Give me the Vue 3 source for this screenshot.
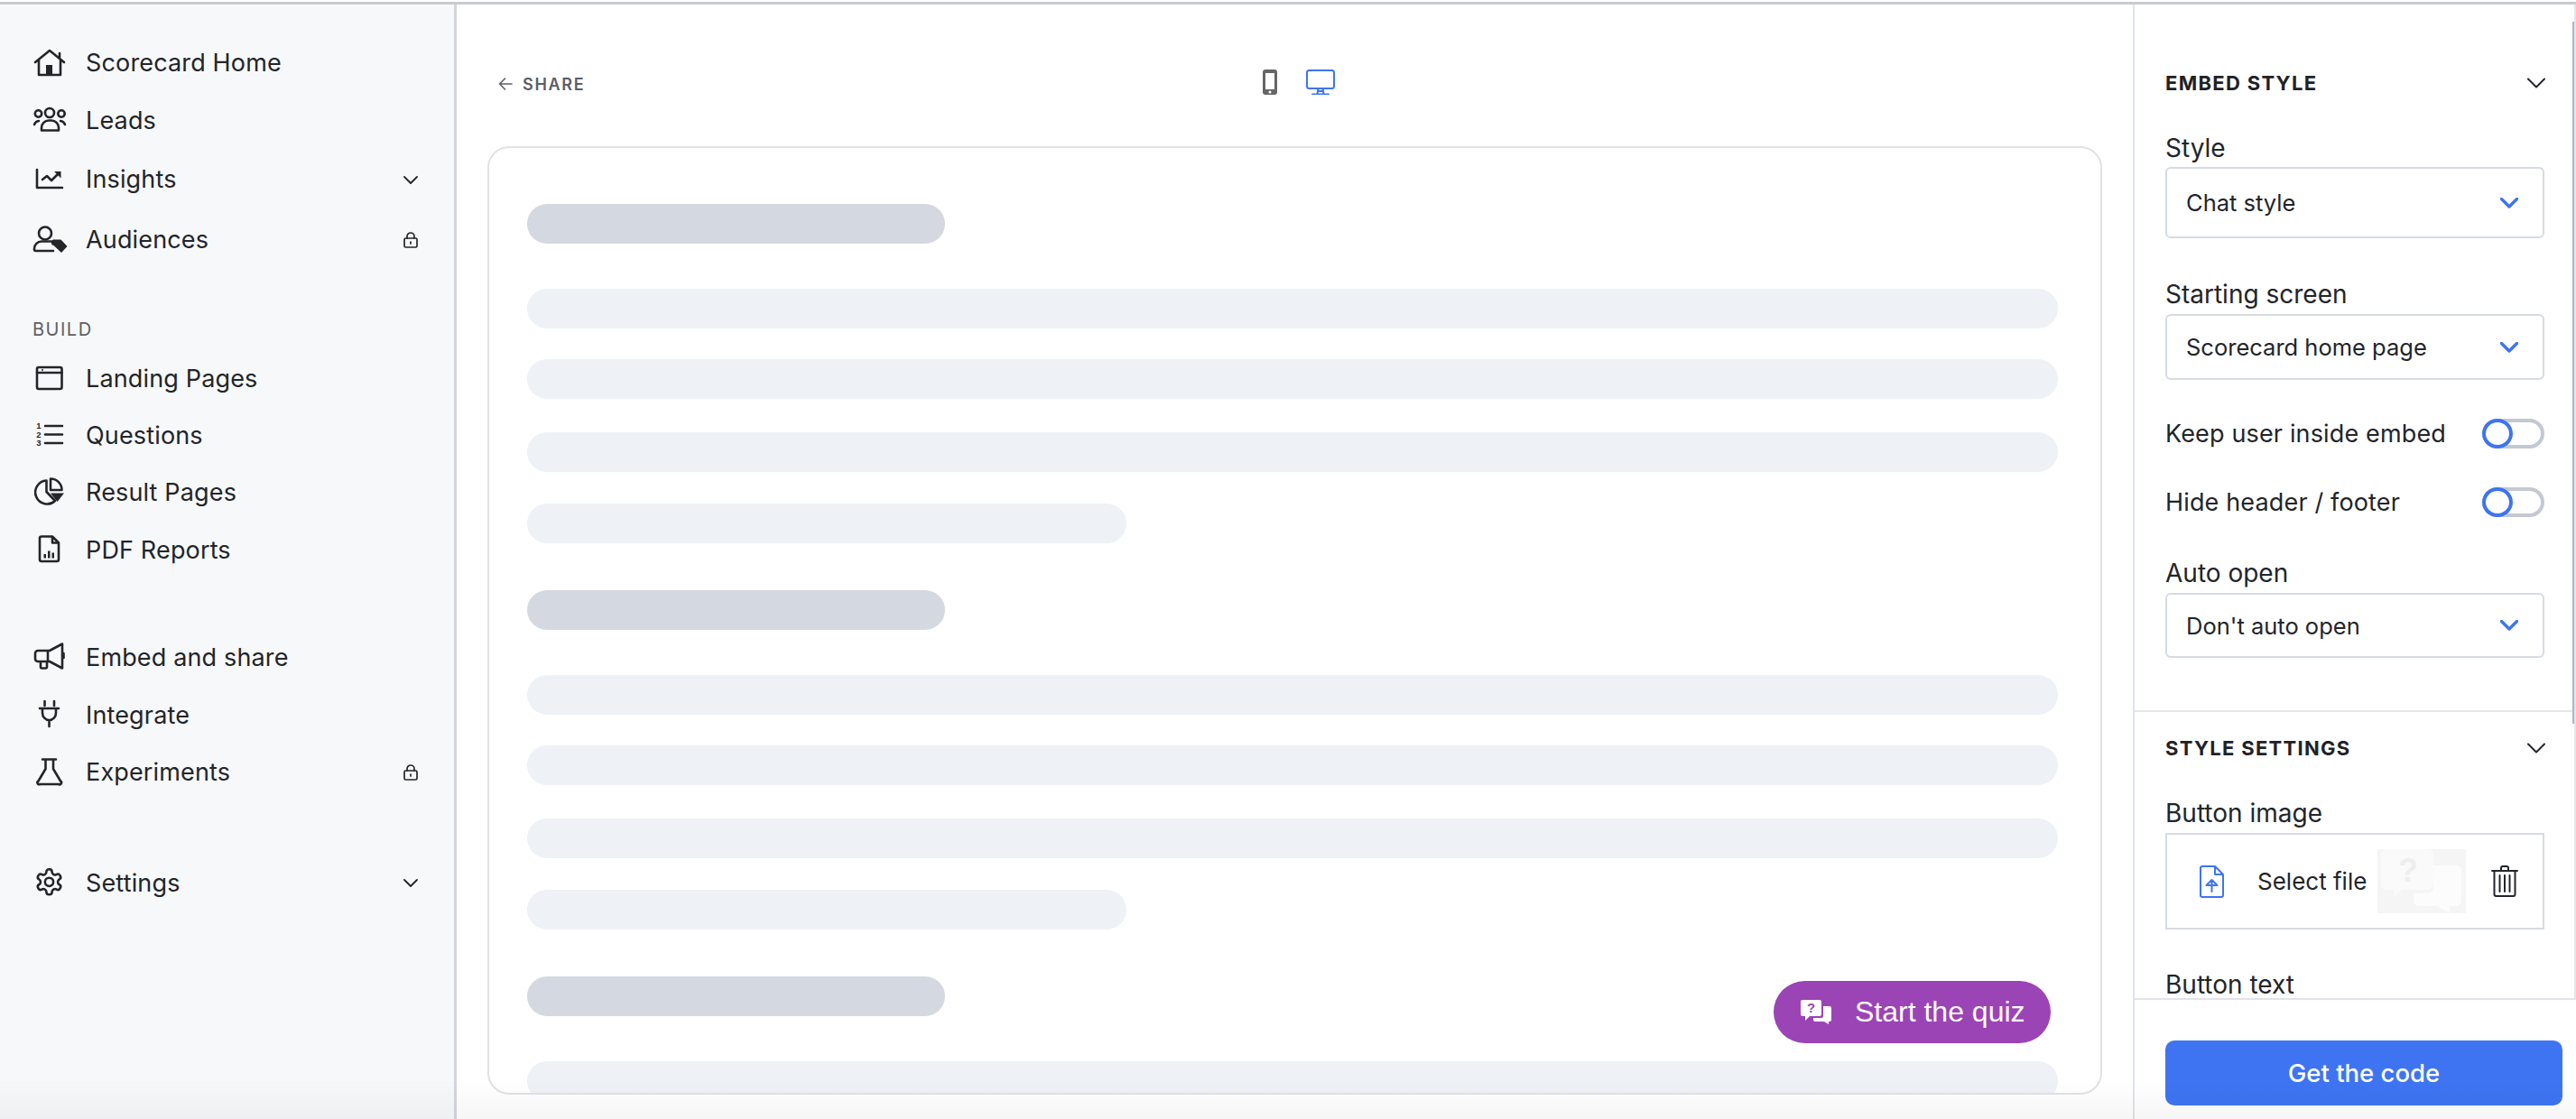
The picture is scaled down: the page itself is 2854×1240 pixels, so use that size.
<script setup>
const groups = [
  [{ cls: 'title' }, { cls: 'l1' }, { cls: 'l2' }, { cls: 'l3' }, { cls: 'l4 short' }],
  [{ cls: 'title' }, { cls: 'l1' }, { cls: 'l2' }, { cls: 'l3' }, { cls: 'l4 short' }],
  [{ cls: 'title' }, { cls: 'l1' }]
]
</script>

<template>
  <div class="app">
    <div class="topline"></div>
    <div class="layout">
      <aside class="sidebar">
        <nav class="nav">
          <a class="row h63">
            <svg class="ic" viewBox="0 0 36 36"><path d="M3 17 19 4l16 13M7 15v16h24V15M30 7v6"/><rect class="f" x="15" y="20" width="7" height="11"/></svg>
            <span>Scorecard Home</span>
          </a>
          <a class="row h64">
            <svg class="ic" viewBox="0 0 36 36"><circle cx="19" cy="10" r="5"/><circle cx="6.5" cy="11" r="3.7"/><circle cx="32" cy="11" r="3.7"/><path d="M10 29.5v-3a8 8 0 0 1 8-8h3a8 8 0 0 1 8 8v3zM2 23a6 6 0 0 1 5-4M36 23a6 6 0 0 0-5-4"/></svg>
            <span>Leads</span>
          </a>
          <a class="row h67">
            <svg class="ic" viewBox="0 0 36 36"><path d="M5 7v20h28M11 18l5-4 5 5 8-8"/><path class="f" d="M24 9h7.500v7.500z"/></svg>
            <span>Insights</span>
            <svg class="tail" viewBox="0 0 16 16"><path d="M1 5l7 7 7-7"/></svg>
          </a>
          <a class="row h67">
            <svg class="ic" viewBox="0 0 36 36"><circle cx="14" cy="10.500" r="7"/><path d="M23 30H3.500A1.500 1.500 0 0 1 2 28.500v-1a8 8 0 0 1 8-8h11"/><path class="f" d="M25 17.500h6.500l7 7.500-6.500 7-8.500-8a2 2 0 0 1 1.500-6.500z"/></svg>
            <span>Audiences</span>
            <svg class="tail lock" viewBox="0 0 16 18"><rect x="1" y="7" width="14" height="10" rx="1.500"/><path d="M4 7V5a4 4 0 0 1 8 0v2"/><path d="M8 11v2"/></svg>
          </a>

          <div class="group-label">BUILD</div>

          <a class="row h63 first-build">
            <svg class="ic" viewBox="0 0 36 36"><rect x="5" y="5" width="27.500" height="24" rx="2"/><path d="M5 11h27.500"/><circle class="f" cx="11" cy="8" r="1"/></svg>
            <span>Landing Pages</span>
          </a>
          <a class="row h63">
            <svg class="ic" viewBox="0 0 36 36"><path d="M14 7h19M14 16.500h19M14 26h19"/><text class="num" x="7" y="10">1</text><text class="num" x="7" y="19.500">2</text><text class="num" x="7" y="29">3</text></svg>
            <span>Questions</span>
          </a>
          <a class="row h63">
            <svg class="ic" viewBox="0 0 36 36"><path d="M15.500 4.500a13 13 0 1 0 9.500 22.500L15.500 17zM20 2.500A12.500 12.500 0 0 1 32.500 15H20z"/><path class="f" d="M20 18.500h15L27.500 28z"/></svg>
            <span>Result Pages</span>
          </a>
          <a class="row h64">
            <svg class="ic" viewBox="0 0 36 36"><path d="M10 3.500h12l7 7V29a2 2 0 0 1-2 2H10a2 2 0 0 1-2-2V5.500a2 2 0 0 1 2-2zM22 3.500v7h7"/><rect class="f" x="12.500" y="23" width="2.500" height="4.500"/><rect class="f" x="17" y="19.500" width="2.500" height="8"/><rect class="f" x="21.500" y="21.500" width="2.500" height="6"/></svg>
            <span>PDF Reports</span>
          </a>

          <a class="row h64 second-block">
            <svg class="ic" viewBox="0 0 36 36"><path d="M33 3.500 19 11H6a3 3 0 0 0-3 3v6a3 3 0 0 0 3 3h13l14 7.500zM17 11v12M9 23v6a1.500 1.500 0 0 0 1.500 1.500h4a1.500 1.500 0 0 0 1.500-1.500v-6M34.500 14v5"/></svg>
            <span>Embed and share</span>
          </a>
          <a class="row h64">
            <svg class="ic" viewBox="0 0 36 36"><path d="M13.500 3v5M24 3v5M8 11h21M11 11v5a7.500 8 0 0 0 15 0v-5M18.500 24v7"/></svg>
            <span>Integrate</span>
          </a>
          <a class="row h63">
            <svg class="ic" viewBox="0 0 36 36"><path d="M11 3.500h15M14.500 3.500V14L6.500 27.500a2 2 0 0 0 2 3.500h20.500a2 2 0 0 0 2-3.500L23 14V3.500"/></svg>
            <span>Experiments</span>
            <svg class="tail lock" viewBox="0 0 16 18"><rect x="1" y="7" width="14" height="10" rx="1.500"/><path d="M4 7V5a4 4 0 0 1 8 0v2"/><path d="M8 11v2"/></svg>
          </a>

          <a class="row h64 third-block">
            <svg class="ic" viewBox="0 0 36 36"><g class="gear"><path d="M12.220 2h-.440a2 2 0 0 0-2 2v.180a2 2 0 0 1-1 1.730l-.430.250a2 2 0 0 1-2 0l-.150-.080a2 2 0 0 0-2.730.730l-.220.380a2 2 0 0 0 .730 2.730l.150.100a2 2 0 0 1 1 1.720v.510a2 2 0 0 1-1 1.740l-.150.090a2 2 0 0 0-.730 2.730l.220.380a2 2 0 0 0 2.730.730l.150-.080a2 2 0 0 1 2 0l.430.250a2 2 0 0 1 1 1.730V20a2 2 0 0 0 2 2h.440a2 2 0 0 0 2-2v-.180a2 2 0 0 1 1-1.730l.430-.250a2 2 0 0 1 2 0l.150.080a2 2 0 0 0 2.730-.730l.220-.390a2 2 0 0 0-.730-2.730l-.150-.080a2 2 0 0 1-1-1.740v-.500a2 2 0 0 1 1-1.740l.150-.090a2 2 0 0 0 .730-2.730l-.220-.380a2 2 0 0 0-2.730-.730l-.150.080a2 2 0 0 1-2 0l-.430-.250a2 2 0 0 1-1-1.730V4a2 2 0 0 0-2-2z"/><circle cx="12" cy="12" r="3.300"/></g></svg>
            <span>Settings</span>
            <svg class="tail" viewBox="0 0 16 16"><path d="M1 5l7 7 7-7"/></svg>
          </a>
        </nav>
      </aside>

      <main class="main">
        <header class="main-head">
          <a class="back">
            <svg viewBox="0 0 16 16"><path d="M15 8H1.500M7.500 2 1.500 8l6 6"/></svg>
            <span>SHARE</span>
          </a>
          <div class="devices">
            <svg class="phone" viewBox="0 0 16 28"><rect width="16" height="28" rx="3" fill="#666"/><rect x="3" y="4" width="10" height="18" fill="#fff"/><circle cx="8" cy="25" r="1.500" fill="#fff"/></svg>
            <svg class="desktop" viewBox="0 0 32 28"><rect x="1" y="1" width="30" height="20" rx="2.500"/><path d="M13.500 21 12.500 27M18.500 21l1 6M7 27.500h18M13 24h6"/></svg>
          </div>
        </header>

        <section class="card">
          <div v-for="(group, g) in groups" :key="g" class="skel-group">
            <div v-for="(item, i) in group" :key="i" class="skel" :class="item.cls"></div>
          </div>
          <button class="quiz">
            <svg viewBox="0 0 34 27"><path d="M2 0h19a2 2 0 0 1 2 2v14a2 2 0 0 1-2 2H10l-5 5v-5H2a2 2 0 0 1-2-2V2a2 2 0 0 1 2-2z" fill="#fff"/><path d="M25 7h7a2 2 0 0 1 2 2v13a2 2 0 0 1-2 2h-1v3l-5-3H16a2 2 0 0 1-2-2v-2h9a2 2 0 0 0 2-2z" fill="#fff"/><text x="11.500" y="14" class="q">?</text></svg>
            <span>Start the quiz</span>
          </button>
        </section>
      </main>

      <aside class="panel">
        <div class="scroller">
          <div class="thumb"></div>
          <section class="sec sec-one">
            <div class="sec-head">
              <h3>EMBED STYLE</h3>
              <svg class="sec-chev" viewBox="0 0 20 12"><path d="M1 1.500l9 9 9-9"/></svg>
            </div>
            <label class="lab lab-first">Style</label>
            <div class="select s79"><span>Chat style</span><svg viewBox="0 0 20 12"><path d="M1.500 1.500 10 10l8.500-8.500"/></svg></div>
            <label class="lab">Starting screen</label>
            <div class="select s73"><span>Scorecard home page</span><svg viewBox="0 0 20 12"><path d="M1.500 1.500 10 10l8.500-8.500"/></svg></div>
            <div class="toggle-row"><span>Keep user inside embed</span><span class="toggle"><i></i></span></div>
            <div class="toggle-row"><span>Hide header / footer</span><span class="toggle"><i></i></span></div>
            <label class="lab">Auto open</label>
            <div class="select s72"><span>Don't auto open</span><svg viewBox="0 0 20 12"><path d="M1.500 1.500 10 10l8.500-8.500"/></svg></div>
          </section>
          <section class="sec sec-two">
            <div class="sec-head">
              <h3>STYLE SETTINGS</h3>
              <svg class="sec-chev" viewBox="0 0 20 12"><path d="M1 1.500l9 9 9-9"/></svg>
            </div>
            <label class="lab lab-first">Button image</label>
            <div class="file-box">
              <svg class="file-ic" viewBox="0 0 27 36"><path d="M3 1h14l9 9v23a2 2 0 0 1-2 2H3a2 2 0 0 1-2-2V3a2 2 0 0 1 2-2zM17 1v9h9M13.500 29V17M7.500 22l6-6 6 6z"/></svg>
              <span class="file-name">Select file</span>
              <svg class="file-thumb" viewBox="0 0 98 71"><rect width="98" height="71" fill="#f5f5f5"/><path d="M8 0h48a6 6 0 0 1 6 6v33a6 6 0 0 1-6 6H28L18 53v-8H10a6 6 0 0 1-6-6V4z" fill="#fafafa"/><path d="M62 18h25a6 6 0 0 1 6 6v33a6 6 0 0 1-6 6h-7v8l-14-8H46a6 6 0 0 1-6-6v-8h16a6 6 0 0 0 6-6z" fill="#fcfcfc"/><text x="34" y="36" class="thumb-q">?</text></svg>
              <svg class="trash" viewBox="0 0 30 35"><path d="M1 6h28M11 6V3a2 2 0 0 1 2-2h4a2 2 0 0 1 2 2v3M3.500 6v26a2 2 0 0 0 2 2h19a2 2 0 0 0 2-2V6M9.500 11v18M15 11v18M20.500 11v18"/></svg>
            </div>
            <label class="lab lab-last">Button text</label>
          </section>
        </div>
        <div class="panel-foot">
          <button class="cta">Get the code</button>
        </div>
      </aside>
    </div>
    <div class="bottom-fade"></div>
  </div>
</template>

<style>
html, body { margin: 0; padding: 0; background: #fff; overflow: hidden; }
</style>

<style scoped>
.app {
  position: relative;
  width: 2854px;
  height: 1240px;
  overflow: hidden;
  font-family: Inter, "Liberation Sans", sans-serif;
  color: #22252a;
  background: #fff;
}
.topline { height: 3px; margin-top: 2px; background: #c9cbce; }
.layout { display: flex; height: 1235px; }

.sidebar {
  width: 503px;
  flex: none;
  box-sizing: content-box;
  background: #f7f8fa;
  border-right: 3px solid #d3d5da;
}
.nav { padding-top: 33px; display: flex; flex-direction: column; }
.row {
  display: flex;
  align-items: center;
  padding: 0 40px 0 36px;
  font-size: 27px;
  letter-spacing: 0.150px;
  color: #22252a;
}
.row > span { margin-left: 23px; flex: 1; }
.h63 { height: 63px; }
.h64 { height: 64px; }
.h67 { height: 67px; }
.first-build { margin-top: 8px; }
.second-block { margin-top: 55px; }
.third-block { margin-top: 59px; }
.group-label {
  margin: 51px 0 0 36px;
  height: 30px;
  line-height: 30px;
  font-size: 20px;
  letter-spacing: 1.500px;
  color: #5d6068;
}
.ic {
  width: 36px;
  height: 36px;
  flex: none;
  overflow: visible;
  fill: none;
  stroke: #22252a;
  stroke-width: 2.6;
  stroke-linecap: round;
  stroke-linejoin: round;
}
.ic .f { fill: #22252a; stroke: none; }
.ic .num {
  font-family: "Liberation Sans", sans-serif;
  font-size: 9.500px;
  font-weight: 700;
  fill: #22252a;
  stroke: none;
  text-anchor: middle;
}
.ic .gear { transform: translate(1.700px, 0.500px) scale(1.400); stroke-width: 1.850; }
.tail {
  width: 16px;
  height: 16px;
  flex: none;
  fill: none;
  stroke: #22252a;
  stroke-width: 1.800;
  stroke-linecap: round;
  stroke-linejoin: round;
}
.tail.lock { height: 18px; stroke-width: 1.700; }

.main {
  flex: 1;
  min-width: 0;
  padding: 0 34px;
  background: #fff;
}
.main-head {
  height: 157px;
  box-sizing: border-box;
  padding: 19px 0 0 8px;
  display: grid;
  grid-template-columns: 1fr auto 1fr;
  align-items: center;
}
.back {
  display: flex;
  align-items: center;
  gap: 11px;
  margin-left: 4px;
  font-size: 18px;
  font-weight: 600;
  letter-spacing: 1.700px;
  color: #5c5e66;
}
.back svg {
  width: 16px;
  height: 16px;
  fill: none;
  stroke: #5c5e66;
  stroke-width: 1.600;
  stroke-linecap: round;
  stroke-linejoin: round;
}
.devices { display: flex; align-items: center; gap: 32px; margin-bottom: 4px; }
.phone { width: 16px; height: 28px; }
.desktop {
  width: 32px;
  height: 28px;
  fill: none;
  stroke: #3e74f2;
  stroke-width: 2;
  stroke-linecap: round;
}
.card {
  position: relative;
  height: 1051px;
  box-sizing: border-box;
  padding: 62px 47px 0 42px;
  border: 2px solid #e2e2e4;
  border-radius: 24px;
  background: #fff;
  overflow: hidden;
}
.skel-group { margin-bottom: 52px; }
.skel { height: 44px; border-radius: 22px; background: #eef1f5; }
.skel.title { width: 463px; background: #d4d8e0; }
.skel.l1 { margin-top: 50px; }
.skel.l2 { margin-top: 34px; }
.skel.l3 { margin-top: 37px; }
.skel.l4 { margin-top: 35px; }
.skel.short { width: 664px; }
.quiz {
  position: absolute;
  right: 55px;
  bottom: 55px;
  width: 307px;
  height: 69px;
  padding: 0 0 0 30px;
  border: 0;
  border-radius: 35px;
  background: #9b44b6;
  color: #fff;
  display: flex;
  align-items: center;
  gap: 26px;
  font-family: "Liberation Sans", Arial, sans-serif;
  font-size: 32px;
}
.quiz svg { width: 34px; height: 27px; flex: none; }
.quiz .q {
  font-family: "Liberation Sans", sans-serif;
  font-size: 15px;
  font-weight: 700;
  fill: #9b44b6;
  text-anchor: middle;
}

.panel {
  width: 489px;
  flex: none;
  border-left: 2px solid #dfe3e9;
  background: #fff;
  display: flex;
  flex-direction: column;
}
.scroller {
  position: relative;
  height: 1103px;
  flex: none;
  overflow: hidden;
  box-sizing: border-box;
  border-right: 2px solid #e3e6eb;
  border-bottom: 2px solid #e0e4ea;
}
.thumb {
  position: absolute;
  top: 19px;
  right: 0;
  width: 2px;
  height: 778px;
  background: #b4b6ba;
}
.sec { padding-left: 34px; padding-right: 33px; }
.sec-one { padding-top: 72px; padding-bottom: 58px; border-bottom: 2px solid #e3e6eb; }
.sec-two { padding-top: 25px; }
.sec-head {
  height: 30px;
  display: flex;
  align-items: center;
  justify-content: space-between;
}
.sec-head h3 {
  margin: 0;
  font-size: 22px;
  font-weight: 700;
  letter-spacing: 1.300px;
  color: #1f2226;
}
.sec-chev {
  width: 20px;
  height: 12px;
  margin-right: -1px;
  fill: none;
  stroke: #22252a;
  stroke-width: 2;
  stroke-linecap: round;
  stroke-linejoin: round;
}
.lab {
  display: block;
  height: 34px;
  line-height: 34px;
  margin-top: 45px;
  font-size: 28px;
  color: #22252a;
}
.lab-first { margin-top: 39px; line-height: 36px; }
.lab-last { margin-top: 43px; line-height: 36px; }
.select {
  margin-top: 5px;
  box-sizing: border-box;
  display: flex;
  align-items: center;
  justify-content: space-between;
  padding: 0 27px 0 21px;
  border: 2px solid #d6dbe3;
  border-radius: 6px;
  font-size: 25.500px;
  color: #22252a;
}
.select svg {
  width: 20px;
  height: 12px;
  fill: none;
  stroke: #3e74f2;
  stroke-width: 3.400;
  stroke-linecap: round;
  stroke-linejoin: round;
}
.s79 { height: 79px; }
.s73 { height: 73px; }
.s72 { height: 72px; }
.toggle-row {
  height: 34px;
  margin-top: 42px;
  display: flex;
  align-items: center;
  justify-content: space-between;
  font-size: 27px;
  letter-spacing: 0.150px;
}
.toggle {
  position: relative;
  width: 69px;
  height: 33px;
  box-sizing: border-box;
  border: 4px solid #c3c8d2;
  border-radius: 17px;
}
.toggle i {
  position: absolute;
  left: -4px;
  top: -4px;
  width: 34px;
  height: 33px;
  box-sizing: border-box;
  border: 4px solid #3e74f2;
  border-radius: 50%;
  background: #fff;
}
.file-box {
  margin-top: 6px;
  height: 107px;
  box-sizing: border-box;
  display: flex;
  align-items: center;
  padding-left: 36px;
  border: 2px solid #d6dbe3;
}
.file-ic {
  width: 27px;
  height: 36px;
  flex: none;
  fill: none;
  stroke: #3e74f2;
  stroke-width: 2;
  stroke-linejoin: round;
  stroke-linecap: round;
}
.file-name { margin-left: 37px; font-size: 26px; width: 119px; white-space: nowrap; }
.file-thumb { width: 98px; height: 71px; margin-left: 14px; flex: none; }
.thumb-q {
  font-family: "Liberation Sans", sans-serif;
  font-size: 36px;
  font-weight: 700;
  fill: #eeeeee;
  text-anchor: middle;
}
.trash {
  width: 30px;
  height: 35px;
  margin-left: 28px;
  flex: none;
  fill: none;
  stroke: #22252a;
  stroke-width: 2;
  stroke-linecap: round;
  stroke-linejoin: round;
}
.panel-foot { padding: 45px 0 0 34px; }
.cta {
  width: 440px;
  height: 72px;
  border: 0;
  border-radius: 10px;
  background: #3e74f2;
  color: #fff;
  font-family: inherit;
  font-size: 27.500px;
  font-weight: 500;
}
.bottom-fade {
  position: absolute;
  left: 0;
  right: 0;
  bottom: 0;
  height: 45px;
  background: linear-gradient(to bottom, rgba(0, 0, 0, 0), rgba(0, 0, 0, 0.035));
  pointer-events: none;
}
</style>
